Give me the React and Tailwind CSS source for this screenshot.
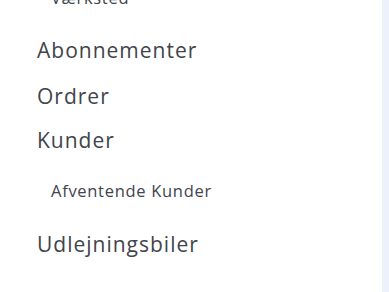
import React from "react";

const items = [
  { label: "Værksted", sub: true, mt: "mt-0" },
  { label: "Abonnementer", mt: "mt-[23px]" },
  { label: "Ordrer", mt: "mt-[16px]" },
  { label: "Kunder", mt: "mt-[14px]" },
  { label: "Afventende Kunder", sub: true, mt: "mt-[20px]" },
  { label: "Udlejningsbiler", mt: "mt-[24px]" },
];

export default function App() {
  return (
    <div className="flex h-[292px] w-[389px] overflow-hidden bg-white font-['Open_Sans',sans-serif]">
      <nav className="-mt-[17px] flex w-[382px] flex-col">
        {items.map((it) => (
          <div
            key={it.label}
            className={`flex h-[30px] shrink-0 items-center ${it.mt} ${
              it.sub
                ? "pl-[51px] text-[16.5px] tracking-[0.7px]"
                : "pl-[37px] text-[21px] tracking-[1px]"
            } text-[#41444c]`}
          >
            {it.label}
          </div>
        ))}
      </nav>
      <div className="h-full flex-1 bg-[#edf1fb]" />
    </div>
  );
}
